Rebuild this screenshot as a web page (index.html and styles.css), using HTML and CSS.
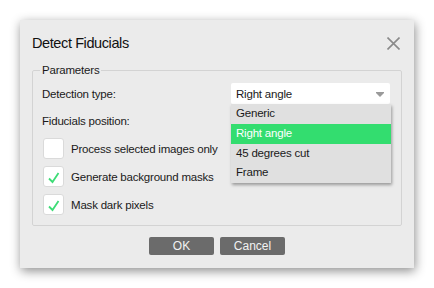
FILE: index.html
```html
<!DOCTYPE html>
<html>
<head>
<meta charset="utf-8">
<link rel="stylesheet" href="styles.css">
</head>
<body>
<div class="dialog">
  <div class="header">
    <div class="title">Detect Fiducials</div>
    <svg class="close" width="13" height="13" viewBox="0 0 13 13"><path d="M0.5 0.5 L12.5 12.5 M12.5 0.5 L0.5 12.5" stroke="#8a8a8a" stroke-width="1.6" fill="none"/></svg>
  </div>
  <fieldset class="group">
    <legend>Parameters</legend>
    <div class="row">
      <span class="label">Detection type:</span>
      <div class="combo">
        <span>Right angle</span>
        <svg class="arrow" width="8" height="5" viewBox="0 0 8 5"><path d="M0 0 H8 V1 L4 5 L0 1 Z" fill="#9a9a9a"/></svg>
        <ul class="list">
          <li>Generic</li>
          <li class="sel">Right angle</li>
          <li>45 degrees cut</li>
          <li>Frame</li>
        </ul>
      </div>
    </div>
    <div class="row row2">
      <span class="label">Fiducials position:</span>
    </div>
    <label class="check">
      <span class="box"></span>
      <span>Process selected images only</span>
    </label>
    <label class="check">
      <span class="box"><svg width="21" height="21" viewBox="0 0 21 21"><path d="M6 12.5 L9.5 16 L15.5 7" stroke="#3ddc76" stroke-width="1.8" fill="none"/></svg></span>
      <span>Generate background masks</span>
    </label>
    <label class="check">
      <span class="box"><svg width="21" height="21" viewBox="0 0 21 21"><path d="M6 12.5 L9.5 16 L15.5 7" stroke="#3ddc76" stroke-width="1.8" fill="none"/></svg></span>
      <span>Mask dark pixels</span>
    </label>
  </fieldset>
  <div class="buttons">
    <button class="btn">OK</button>
    <button class="btn">Cancel</button>
  </div>
</div>
</body>
</html>
```
FILE: styles.css
```css
* { box-sizing: border-box; }
html, body { margin: 0; padding: 0; background: #fff; }
body {
  width: 434px; height: 288px; overflow: hidden;
  font-family: "Liberation Sans", Arial, sans-serif;
  font-size: 11.5px; letter-spacing: -0.2px; color: #1a1a1a;
}
.dialog {
  margin: 20px 0 0 20px;
  width: 394px; height: 248px;
  background: #ebebeb;
  box-shadow: 1px 3px 10px rgba(0,0,0,0.45);
  padding: 0 12px;
  display: flex; flex-direction: column;
}
.header {
  height: 42px; padding-top: 4px;
  display: flex; align-items: center; justify-content: space-between;
}
.title { font-size: 14.5px; letter-spacing: -0.4px; color: #111; }
.close { margin-right: 2px; }
.group {
  margin: 0; padding: 5px 11px 10px 9px;
  border: 1px solid #d3d3d3; border-radius: 2px;
  display: flex; flex-direction: column; gap: 7px;
}
legend { padding: 0 2px; margin-left: -2px; line-height: 16px; }
.row { display: flex; align-items: center; height: 21px; }
.row2 { height: 20px; }
.combo {
  margin-left: auto; position: relative;
  width: 159px; height: 21px;
  background: #fff; border-radius: 2px;
  display: flex; align-items: center; padding-left: 5px;
}
.arrow { position: absolute; right: 6px; top: 9px; }
.list {
  position: absolute; left: 0; top: 21px; margin: 0; padding: 0;
  list-style: none; width: 160px;
  background: #e0e0e0;
  box-shadow: 1px 2px 3px rgba(0,0,0,0.35);
  z-index: 2;
}
.list li { height: 19.75px; line-height: 19.75px; padding-left: 5px; }
.list li.sel { background: #33dd6f; color: #fff; }
.check { display: flex; align-items: center; gap: 7px; height: 21px; padding-left: 1px; }
.box {
  width: 21px; height: 21px; background: #fff;
  border: 1px solid #dadada; border-radius: 3px; position: relative;
}
.box svg { position: absolute; left: -1px; top: -1px; }
.buttons { display: flex; justify-content: center; gap: 6px; margin-top: 11px; }
.btn {
  width: 65px; height: 18px; border: none; border-radius: 2px;
  background: #6b6b6b; color: #f2f2f2;
  font-family: inherit; font-size: 12px; letter-spacing: 0; padding: 0;
}
```
